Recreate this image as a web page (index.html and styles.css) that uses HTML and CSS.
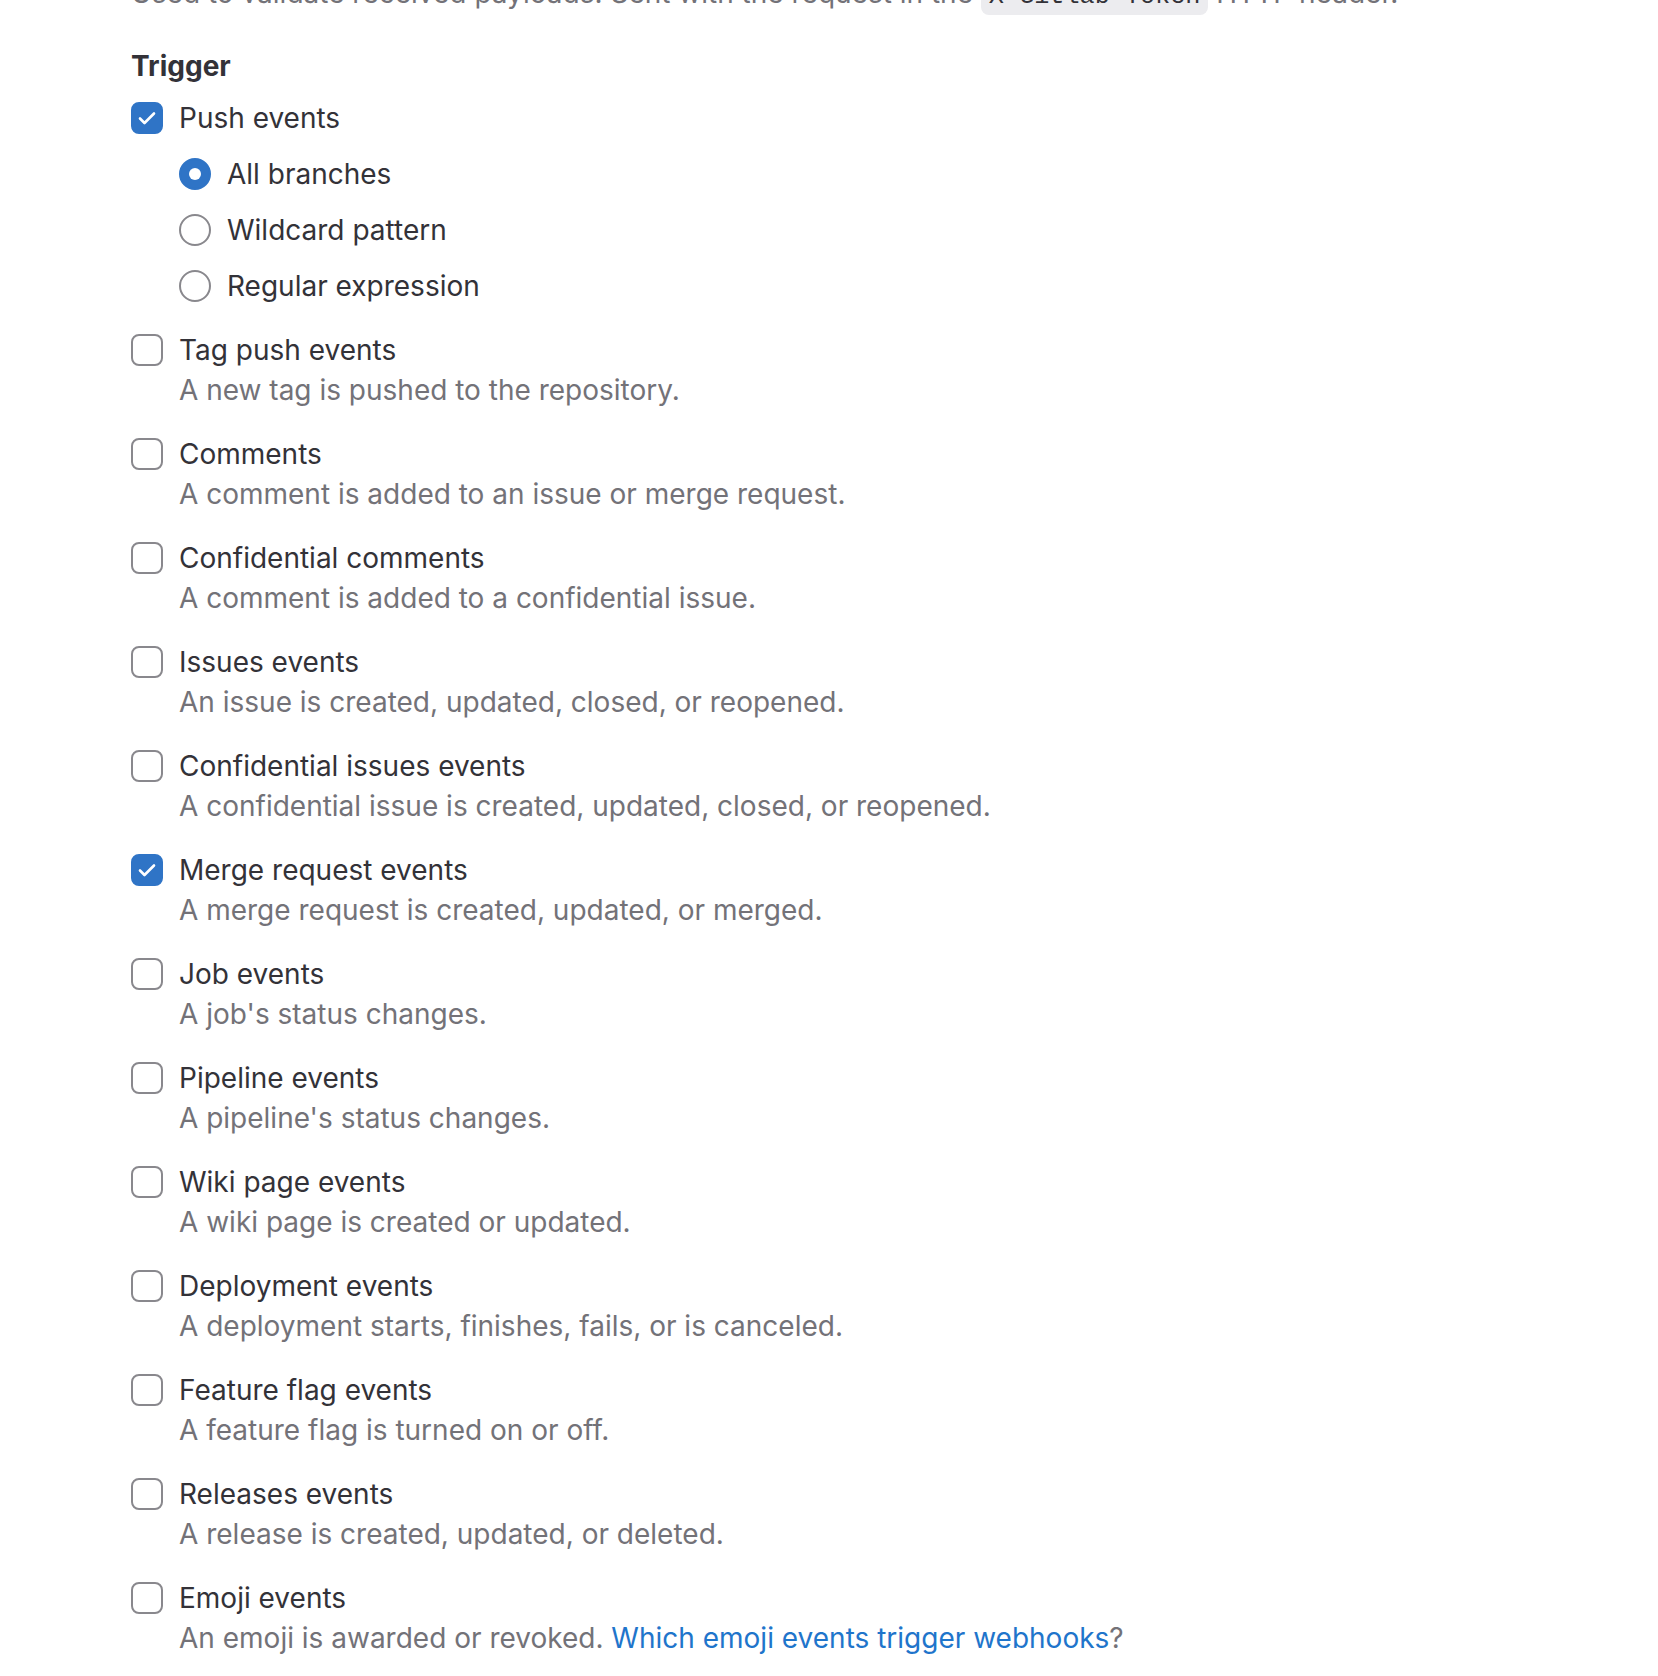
FILE: index.html
```html
<!DOCTYPE html>
<html lang="en">
<head>
    <meta charset="UTF-8">
    <meta name="viewport" content="width=device-width, initial-scale=1.0">
    <title>Webhook triggers</title>
    <link rel="stylesheet" href="styles.css">
</head>
<body>

    <div class="webhook-form">
        <p class="help-text">Used to validate received payloads. Sent with the request in the <code>X-Gitlab-Token</code> HTTP header.</p>

        <fieldset class="trigger-group">
            <legend>Trigger</legend>

            <div class="events">
                <div class="event">
                    <label class="check-row">
                        <span class="box checked"><svg viewBox="0 0 32 32"><path d="M9 16.5l4.5 4.5 9.5-9.5"/></svg></span>
                        Push events
                    </label>
                    <div class="branch-options">
                        <label class="check-row">
                            <span class="radio checked"></span>
                            All branches
                        </label>
                        <label class="check-row">
                            <span class="radio"></span>
                            Wildcard pattern
                        </label>
                        <label class="check-row">
                            <span class="radio"></span>
                            Regular expression
                        </label>
                    </div>
                </div>

                <div class="event">
                    <label class="check-row"><span class="box"></span>Tag push events</label>
                    <p class="event-desc">A new tag is pushed to the repository.</p>
                </div>

                <div class="event">
                    <label class="check-row"><span class="box"></span>Comments</label>
                    <p class="event-desc">A comment is added to an issue or merge request.</p>
                </div>

                <div class="event">
                    <label class="check-row"><span class="box"></span>Confidential comments</label>
                    <p class="event-desc">A comment is added to a confidential issue.</p>
                </div>

                <div class="event">
                    <label class="check-row"><span class="box"></span>Issues events</label>
                    <p class="event-desc">An issue is created, updated, closed, or reopened.</p>
                </div>

                <div class="event">
                    <label class="check-row"><span class="box"></span>Confidential issues events</label>
                    <p class="event-desc">A confidential issue is created, updated, closed, or reopened.</p>
                </div>

                <div class="event">
                    <label class="check-row">
                        <span class="box checked"><svg viewBox="0 0 32 32"><path d="M9 16.5l4.5 4.5 9.5-9.5"/></svg></span>
                        Merge request events
                    </label>
                    <p class="event-desc">A merge request is created, updated, or merged.</p>
                </div>

                <div class="event">
                    <label class="check-row"><span class="box"></span>Job events</label>
                    <p class="event-desc">A job's status changes.</p>
                </div>

                <div class="event">
                    <label class="check-row"><span class="box"></span>Pipeline events</label>
                    <p class="event-desc">A pipeline's status changes.</p>
                </div>

                <div class="event">
                    <label class="check-row"><span class="box"></span>Wiki page events</label>
                    <p class="event-desc">A wiki page is created or updated.</p>
                </div>

                <div class="event">
                    <label class="check-row"><span class="box"></span>Deployment events</label>
                    <p class="event-desc">A deployment starts, finishes, fails, or is canceled.</p>
                </div>

                <div class="event">
                    <label class="check-row"><span class="box"></span>Feature flag events</label>
                    <p class="event-desc">A feature flag is turned on or off.</p>
                </div>

                <div class="event">
                    <label class="check-row"><span class="box"></span>Releases events</label>
                    <p class="event-desc">A release is created, updated, or deleted.</p>
                </div>

                <div class="event">
                    <label class="check-row"><span class="box"></span>Emoji events</label>
                    <p class="event-desc">An emoji is awarded or revoked. <a href="#">Which emoji events trigger webhooks</a>?</p>
                </div>
            </div>
        </fieldset>
    </div>

</body>
</html>
```

FILE: styles.css
```css
/* Basic reset */
* {
    margin: 0;
    padding: 0;
    box-sizing: border-box;
}

body {
    font-family: 'Inter', 'Noto Sans', sans-serif;
    font-size: 28px;
    line-height: 40px;
    color: #333238;
    background-color: #fff;
}

.webhook-form {
    margin-top: -27px;
    padding-left: 131px;
}

.help-text {
    color: #737278;
    margin-bottom: 29px;
}

.help-text code {
    font-family: 'Liberation Mono', monospace;
    font-size: 90%;
    padding: 4px 8px;
    background-color: #ececef;
    color: #333238;
    border-radius: 8px;
}

.trigger-group {
    border: none;
}

.trigger-group legend {
    font-weight: bold;
    margin-bottom: 12px;
}

.events {
    display: flex;
    flex-direction: column;
    gap: 24px;
}

.check-row {
    display: flex;
    align-items: center;
    gap: 16px;
    cursor: pointer;
}

.box,
.radio {
    flex: none;
    width: 32px;
    height: 32px;
    border: 2px solid #89888d;
    background-color: #fff;
}

.box {
    border-radius: 8px;
}

.box svg {
    display: block;
    margin: -2px;
    width: 32px;
    height: 32px;
}

.box svg path {
    fill: none;
    stroke: #fff;
    stroke-width: 2.6;
    stroke-linecap: round;
    stroke-linejoin: round;
}

.box.checked {
    background-color: #2f74c6;
    border-color: #2f74c6;
}

.radio {
    border-radius: 50%;
    position: relative;
}

.radio.checked {
    background-color: #2f74c6;
    border-color: #2f74c6;
}

.radio.checked::after {
    content: '';
    position: absolute;
    top: 8px;
    left: 8px;
    width: 12px;
    height: 12px;
    border-radius: 50%;
    background-color: #fff;
}

.branch-options {
    display: flex;
    flex-direction: column;
    gap: 16px;
    margin-top: 16px;
    padding-left: 48px;
}

.event-desc {
    color: #737278;
    padding-left: 48px;
}

.event-desc a {
    color: #1f75cb;
    text-decoration: none;
}
```
